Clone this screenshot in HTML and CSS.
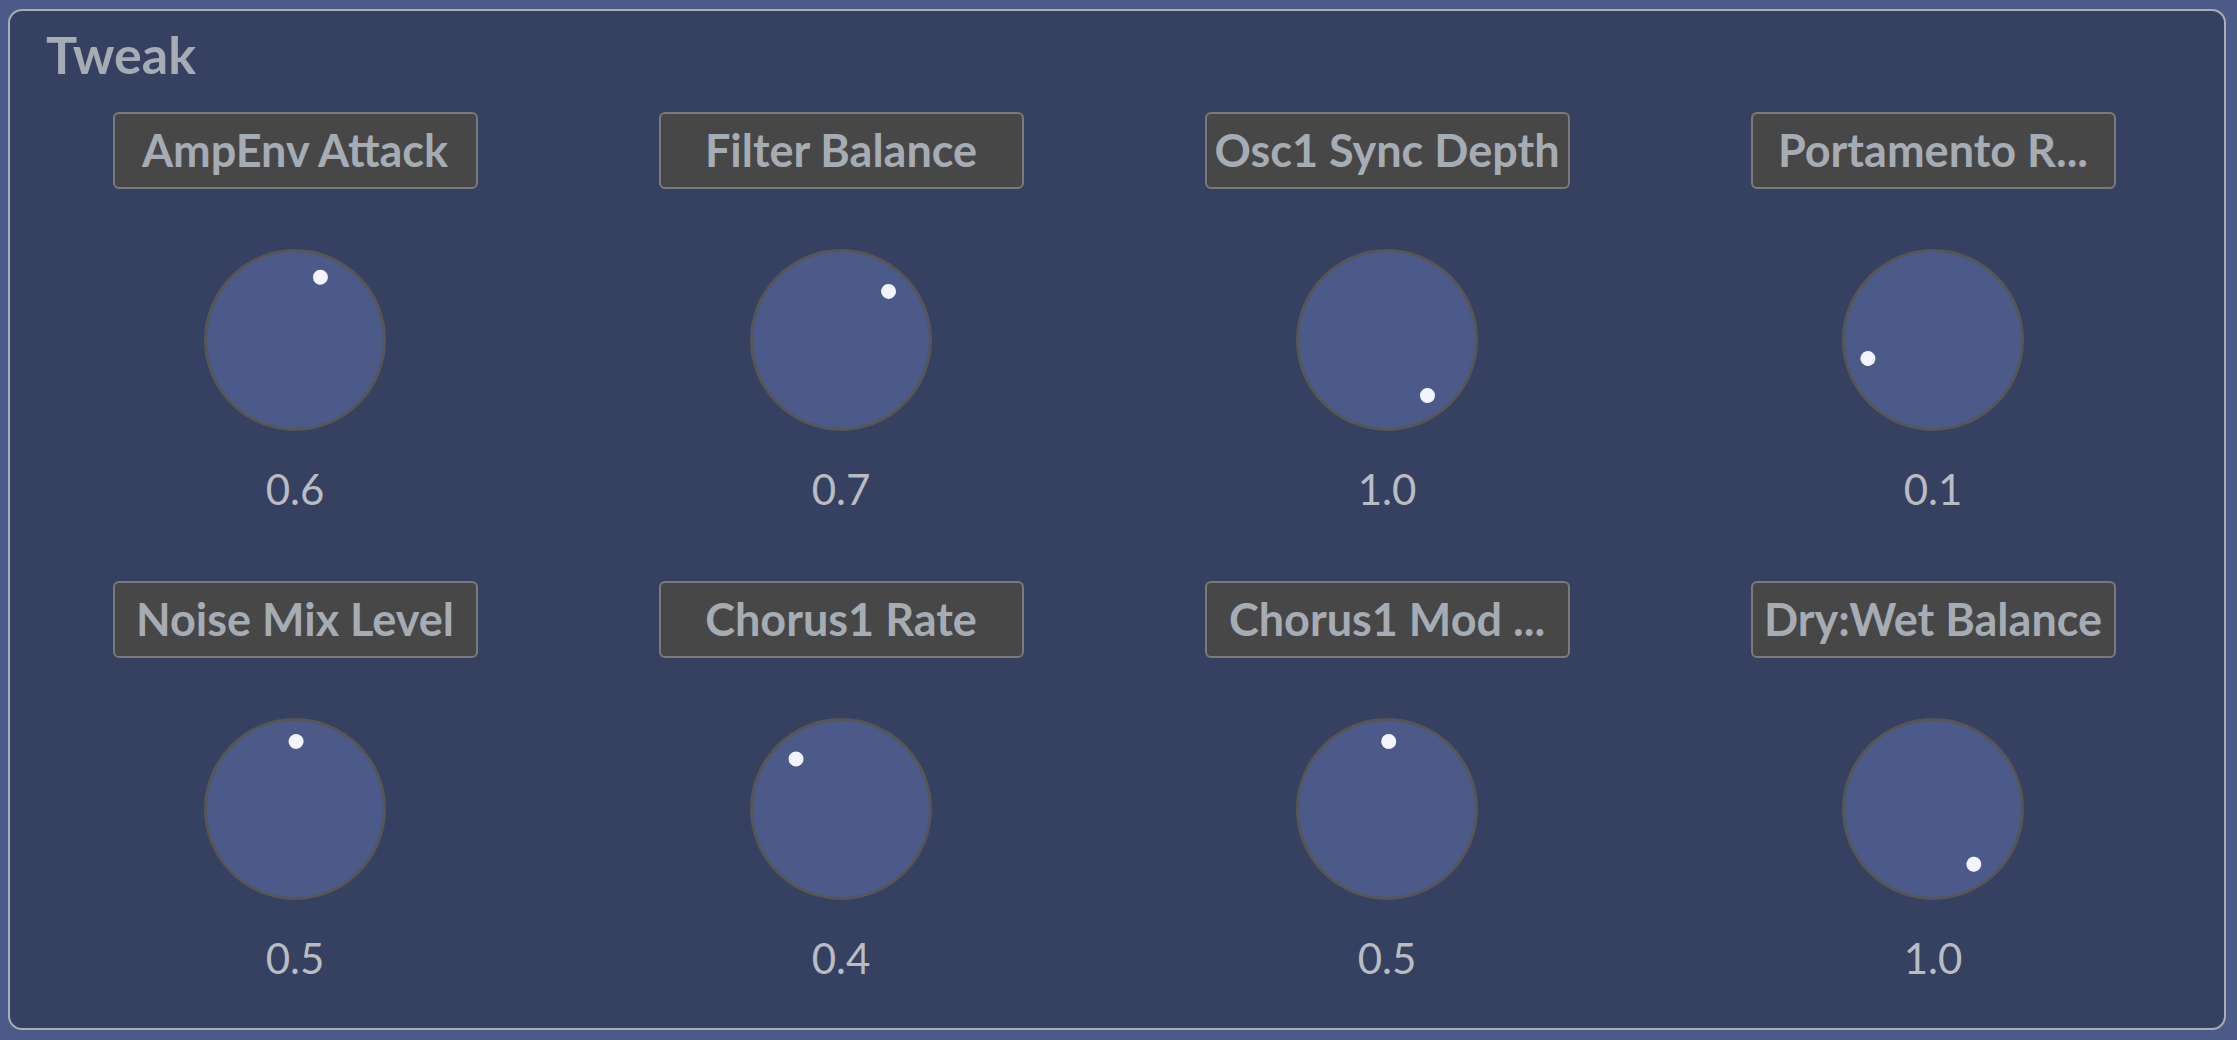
FILE: index.html
```html
<!DOCTYPE html>
<html>
<head>
<meta charset="utf-8">
<link rel="stylesheet" href="styles.css">
</head>
<body>
<div class="panel">
  <div class="title">Tweak</div>
  <div class="grid">
    <div class="cell"><div class="label">AmpEnv Attack</div><div class="knob"><span class="dot" style="--a:21.5deg"></span></div><div class="value">0.6</div></div>
    <div class="cell"><div class="label">Filter Balance</div><div class="knob"><span class="dot" style="--a:43.8deg"></span></div><div class="value">0.7</div></div>
    <div class="cell"><div class="label">Osc1 Sync Depth</div><div class="knob"><span class="dot" style="--a:144deg"></span></div><div class="value">1.0</div></div>
    <div class="cell"><div class="label">Portamento R...</div><div class="knob"><span class="dot" style="--a:-105.4deg"></span></div><div class="value">0.1</div></div>
    <div class="cell"><div class="label">Noise Mix Level</div><div class="knob"><span class="dot" style="--a:0.5deg"></span></div><div class="value">0.5</div></div>
    <div class="cell"><div class="label">Chorus1 Rate</div><div class="knob"><span class="dot" style="--a:-41.9deg"></span></div><div class="value">0.4</div></div>
    <div class="cell"><div class="label">Chorus1 Mod ...</div><div class="knob"><span class="dot" style="--a:1deg"></span></div><div class="value">0.5</div></div>
    <div class="cell"><div class="label">Dry:Wet Balance</div><div class="knob"><span class="dot" style="--a:143.6deg"></span></div><div class="value">1.0</div></div>
  </div>
</div>
</body>
</html>
```

FILE: styles.css
```css
html, body {
  margin: 0;
  padding: 0;
  background: #4b5a88;
  width: 2237px;
  height: 1040px;
  overflow: hidden;
}

.panel {
  box-sizing: border-box;
  margin: 9px 0 0 8px;
  width: 2218px;
  height: 1021px;
  background: #364061;
  border: 2px solid #a9adb4;
  border-radius: 14px;
  padding: 0 12px;
  font-family: "Lato", "Liberation Sans", sans-serif;
}

.title {
  margin: 13px 0 0 24px;
  font-size: 52px;
  font-weight: 700;
  line-height: 60px;
  height: 60px;
  color: #a6acb3;
}

.grid {
  display: grid;
  grid-template-columns: repeat(4, 546px);
  margin-top: 28px;
}

.cell {
  display: flex;
  flex-direction: column;
  align-items: center;
  height: 469px;
}

.label {
  box-sizing: border-box;
  width: 365px;
  height: 77px;
  background: #474747;
  border: 2px solid #7a7a7a;
  border-radius: 6px;
  color: #a6acb3;
  font-size: 45px;
  font-weight: 700;
  line-height: 73px;
  text-align: center;
  white-space: nowrap;
  overflow: hidden;
}

.knob {
  position: relative;
  box-sizing: border-box;
  width: 182px;
  height: 182px;
  margin-top: 60px;
  border-radius: 50%;
  background: #4b5a88;
  border: 3px solid #565656;
}

.dot {
  position: absolute;
  left: 50%;
  top: 50%;
  width: 15px;
  height: 15px;
  margin: -7.5px 0 0 -7.5px;
  border-radius: 50%;
  background: #f2f5ff;
  transform: rotate(var(--a)) translateY(-68px);
}

.value {
  margin-top: 33px;
  font-size: 42px;
  line-height: 50px;
  color: #b9bcc2;
}
```
